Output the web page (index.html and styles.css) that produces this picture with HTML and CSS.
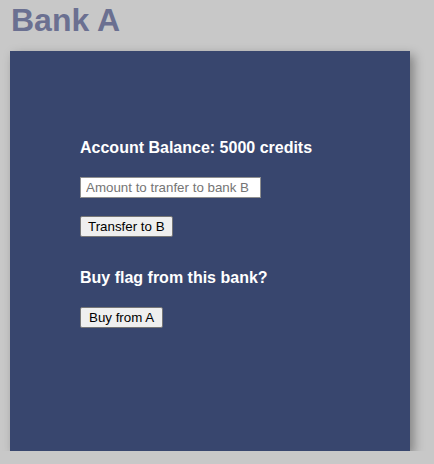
FILE: index.html
```html
<!DOCTYPE html>
<html>
<head>
<meta charset="utf-8">
<link rel="stylesheet" href="styles.css">
</head>
<body>
<h1 class="title">Bank A</h1>
<div class="panel">
  <h2 class="heading">Account Balance: 5000 credits</h2>
  <input class="amount" type="text" placeholder="Amount to tranfer to bank B">
  <button class="btn btn-transfer">Transfer to B</button>
  <h2 class="heading heading-buy">Buy flag from this bank?</h2>
  <button class="btn btn-buy">Buy from A</button>
</div>
</body>
</html>
```
FILE: styles.css
```css
html, body {
  margin: 0;
  background: #c8c8c8;
  font-family: "Liberation Sans", Arial, sans-serif;
}
body {
  padding: 0 10px;
}
.title {
  margin: 2px 0 12px 0;
  padding-left: 1px;
  font-size: 32px;
  line-height: 37px;
  color: #6b7091;
  font-weight: bold;
}
.panel {
  width: 400px;
  height: 400px;
  box-sizing: border-box;
  background: #38466e;
  padding: 88px 70px 0 70px;
  box-shadow: 4px 4px 10px rgba(0,0,0,0.35);
  display: flex;
  flex-direction: column;
  align-items: flex-start;
}
.heading {
  margin: 0;
  font-size: 16px;
  line-height: 18px;
  font-weight: bold;
  color: #ffffff;
}
.amount {
  margin: 20px 0 0 0;
  font-family: "Liberation Sans", Arial, sans-serif;
  font-size: 13.33px;
  width: 181px;
  height: 21px;
  box-sizing: border-box;
  padding: 1px 5px;
  border: 1px solid #8f8f8f;
  background: #fff;
}
.amount::placeholder {
  color: #757575;
}
.btn {
  font-family: "Liberation Sans", Arial, sans-serif;
  font-size: 13.33px;
  height: 21px;
  box-sizing: border-box;
  padding: 1px 7px;
  margin: 18px 0 0 0;
  border: 1px solid #767676;
  border-radius: 2px;
  background: #efefef;
  color: #000;
}
.btn-transfer {
  margin-bottom: 32px;
}
.btn-buy {
  padding: 1px 8px;
}
.heading-buy {
  margin-bottom: 2px;
}
```
